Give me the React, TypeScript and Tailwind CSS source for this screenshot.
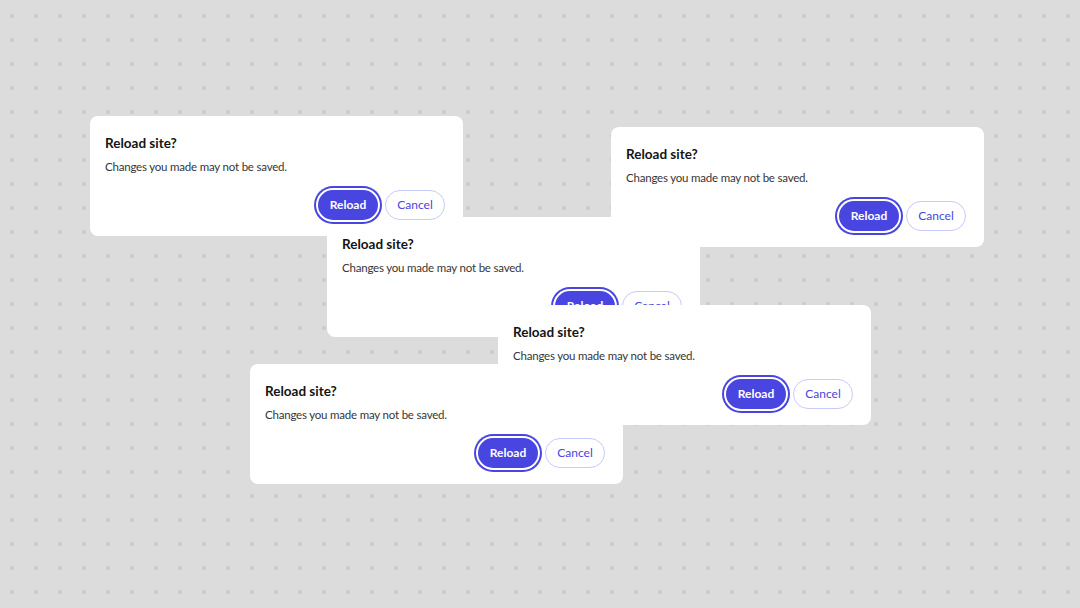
import React from "react";

type Pos = { left: number; top: number };

const cards: Pos[] = [
  { left: 327, top: 217 },
  { left: 250, top: 364 },
  { left: 90, top: 116 },
  { left: 611, top: 127 },
  { left: 498, top: 305 },
];

function Dialog({ left, top }: Pos) {
  return (
    <div
      className="absolute w-[373px] h-[120px] rounded-[8px] bg-white pt-[17px] pl-[15px] pr-[18px] pb-4 flex flex-col"
      style={{ left, top }}
    >
      <div className="text-[13.5px] leading-5 font-bold text-[#141414]">Reload site?</div>
      <div className="mt-[4px] text-[11.5px] leading-5 tracking-[-0.2px] text-[#363636]">Changes you made may not be saved.</div>
      <div className="mt-[13px] flex justify-end gap-[7px]">
        <button className="w-[60px] h-[30px] rounded-full bg-[#4845e0] text-white text-[12px] font-bold shadow-[0_0_0_2px_#ffffff,0_0_0_4px_#4845e0]">
          Reload
        </button>
        <button className="w-[60px] h-[30px] rounded-full bg-white border border-[#c9c9fa] text-[#4845e0] text-[12px]">
          Cancel
        </button>
      </div>
    </div>
  );
}

export default function App() {
  return (
    <div
      className="relative w-[1080px] h-[608px] overflow-hidden bg-[#dcdcdc] bg-[radial-gradient(circle,#cdcdcd_2px,transparent_2.6px)] bg-[size:24px_24px] bg-[position:0px_4px]"
      style={{ fontFamily: 'Lato, "Noto Sans", sans-serif' }}
    >
      {cards.map((c, i) => (
        <Dialog key={i} left={c.left} top={c.top} />
      ))}
    </div>
  );
}
